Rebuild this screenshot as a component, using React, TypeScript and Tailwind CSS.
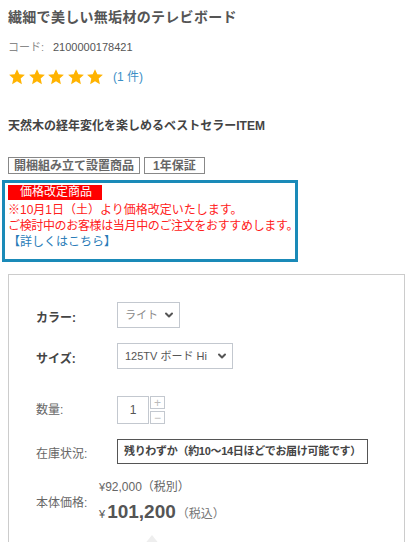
import { ChevronDown } from "lucide-react";

const font = { fontFamily: '"Liberation Sans", "Noto Sans CJK JP", sans-serif' };

const Star = () => (
  <svg width="18" height="18" viewBox="0 0 24 24" className="shrink-0">
    <polygon
      points="12,1.5 15.1,8.3 22.5,9.1 16.9,14.1 18.5,21.5 12,17.7 5.5,21.5 7.1,14.1 1.5,9.1 8.9,8.3"
      fill="#ffb300"
    />
  </svg>
);

const FakeSelect: React.FC<{ label: string; width: string; dim?: boolean }> = ({ label, width, dim }) => (
  <div
    className={`flex h-[26px] items-center justify-between border border-[#c3c8cf] pl-[7px] pr-[4px] text-[11px] ${width} ${
      dim ? "text-[#8a8a8a]" : "text-[#555]"
    }`}
  >
    <span className="whitespace-nowrap">{label}</span>
    <ChevronDown size={12} strokeWidth={4} className="shrink-0 text-[#555]" />
  </div>
);

export default function App() {
  return (
    <div className="h-[542px] overflow-hidden bg-white px-2 pt-[7px]" style={font}>
      <h1 className="h-[20px] text-[14px] font-bold leading-[20px] tracking-[0.3px] text-[#555]">
        繊細で美しい無垢材のテレビボード
      </h1>

      <div className="mt-[12px] flex h-[16px] items-center text-[11px] leading-[16px]">
        <span className="w-[45px] text-[#8a8a8a]">コード:</span>
        <span className="text-[#555]">2100000178421</span>
      </div>

      <div className="mt-[13px] flex h-[18px] items-center">
        <div className="flex gap-[1.5px]">
          <Star />
          <Star />
          <Star />
          <Star />
          <Star />
        </div>
        <span className="ml-[9px] text-[12px] text-[#3b8fc6]">(1 件)</span>
      </div>

      <p className="mt-[31px] h-[18px] text-[12px] font-bold leading-[18px] text-[#444]">
        天然木の経年変化を楽しめるベストセラーITEM
      </p>

      <div className="mt-[22px] flex gap-[4px]">
        <span className="flex h-[17px] items-center border border-[#888] px-[5px] text-[12px] font-bold text-[#666]">
          開梱組み立て設置商品
        </span>
        <span className="flex h-[17px] items-center border border-[#888] px-[8px] text-[12px] font-bold text-[#666]">
          1年保証
        </span>
      </div>

      <div className="-ml-[6px] mt-[6px] h-[82px] w-[296px] border-[3px] border-[#1a8ab8] pl-[3px] pt-[2px]">
        <div className="flex h-[15px] w-[94px] items-center bg-[#ff0000] pl-[12px] text-[12px] leading-[15px] text-white">
          価格改定商品
        </div>
        <p className="mt-[2px] text-[12px] leading-[16px] text-[#ff2020]">※10月1日（土）より価格改定いたします。</p>
        <p className="whitespace-nowrap text-[12px] leading-[16px] tracking-[-0.35px] text-[#ff2020]">
          ご検討中のお客様は当月中のご注文をおすすめします。
        </p>
        <p className="text-[12px] leading-[16px] text-[#2a7cb8]">【詳しくはこちら】</p>
      </div>

      <section className="mt-[12px] h-[300px] border border-[#ccc] pl-[27px] pt-[27px]">
        <div className="flex items-center">
          <span className="mt-[5px] w-[81px] text-[12px] font-bold text-[#444]">カラー:</span>
          <FakeSelect label="ライト" width="w-[63px]" dim />
        </div>

        <div className="mt-[15px] flex items-center">
          <span className="mt-[5px] w-[81px] text-[12px] font-bold text-[#444]">サイズ:</span>
          <FakeSelect label="125TV ボード Hi" width="w-[116px]" />
        </div>

        <div className="mt-[27px] flex items-center">
          <span className="w-[81px] text-[12px] text-[#666]">数量:</span>
          <div className="flex h-[28px] w-[32px] items-center justify-center border border-[#c3c8cf] text-[12px] text-[#555]">
            1
          </div>
          <div className="ml-[1px] flex flex-col gap-[2px]">
            <div className="flex h-[13px] w-[15px] items-center justify-center border border-[#c3c8cf] text-[12px] leading-none text-[#bbb]">
              +
            </div>
            <div className="flex h-[13px] w-[15px] items-center justify-center border border-[#c3c8cf] text-[12px] leading-none text-[#bbb]">
              −
            </div>
          </div>
        </div>

        <div className="mt-[15px] flex items-center">
          <span className="mt-[4px] w-[81px] text-[12px] text-[#666]">在庫状況:</span>
          <div className="flex h-[25px] w-[251px] items-center justify-center whitespace-nowrap border-[1.5px] border-[#555] text-[11px] font-bold tracking-[-0.3px] text-[#444]">
            残りわずか（約10～14日ほどでお届け可能です）
          </div>
        </div>

        <div className="mt-[14px] flex items-center">
          <span className="mt-[2px] w-[63px] text-[12px] text-[#666]">本体価格:</span>
          <div className="flex flex-col">
            <span className="text-[12px] leading-[18px] text-[#666]">
              <span className="text-[11px]">¥</span>92,000（税別）
            </span>
            <span className="mt-[2px] flex items-baseline text-[#555]">
              <span className="text-[11px]">¥</span>
              <span className="ml-[2px] text-[19px] font-bold leading-[28px]">101,200</span>
              <span className="ml-[1px] text-[12px] text-[#777]">（税込）</span>
            </span>
          </div>
        </div>

        <div className="ml-[108px] mt-[9px]">
          <svg width="16" height="10" viewBox="0 0 16 10">
            <polygon points="8,0 16,10 0,10" fill="#eee" />
          </svg>
        </div>
      </section>
    </div>
  );
}
